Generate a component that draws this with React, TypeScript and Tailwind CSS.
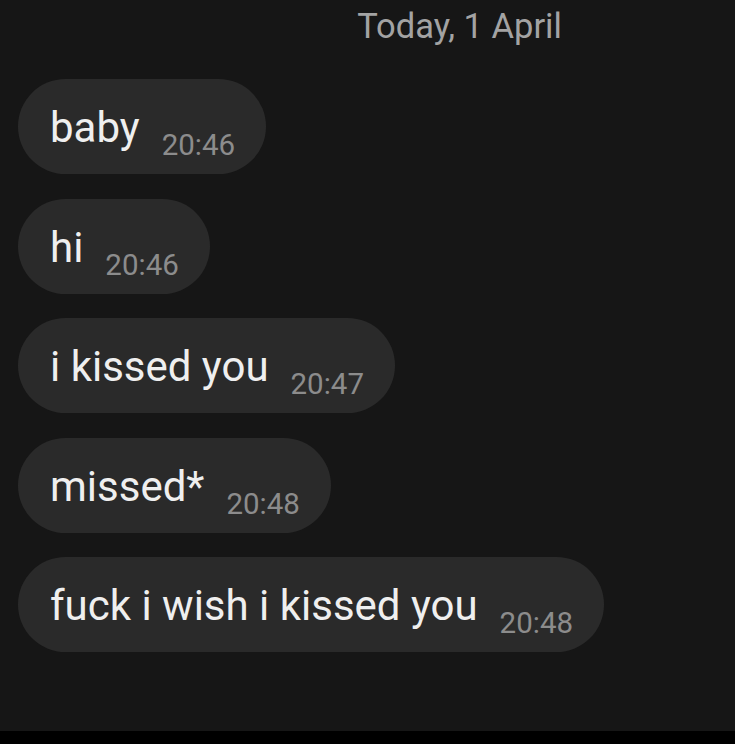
const messages = [
  { text: "baby", time: "20:46" },
  { text: "hi", time: "20:46" },
  { text: "i kissed you", time: "20:47" },
  { text: "missed*", time: "20:48" },
  { text: "fuck i wish i kissed you", time: "20:48" },
];

export default function App() {
  return (
    <div
      className="w-[735px] h-[744px] flex flex-col bg-black overflow-hidden"
      style={{ fontFamily: "Roboto, 'Liberation Sans', sans-serif" }}
    >
      <div className="h-[731px] bg-[#161616] flex flex-col">
        <div className="flex justify-center pl-[184px] pt-[6px] mb-[33px]">
          <span className="text-[34.5px] leading-[40px] text-[#a3a3a3]">
            Today, 1 April
          </span>
        </div>

        <div className="flex flex-col items-start gap-[24.5px] pl-[18px]">
          {messages.map((m, idx) => (
            <div
              key={idx}
              className="h-[95px] box-border rounded-full bg-[#2a2a2a] pl-[32px] pr-[31px] pt-[28px] flex items-baseline gap-[22px]"
            >
              <span className="text-[42px] leading-none text-[#efefef] whitespace-nowrap">
                {m.text}
              </span>
              <span className="text-[29.5px] leading-none text-[#8c8c8c] translate-y-[13px]">
                {m.time}
              </span>
            </div>
          ))}
        </div>
      </div>
    </div>
  );
}
